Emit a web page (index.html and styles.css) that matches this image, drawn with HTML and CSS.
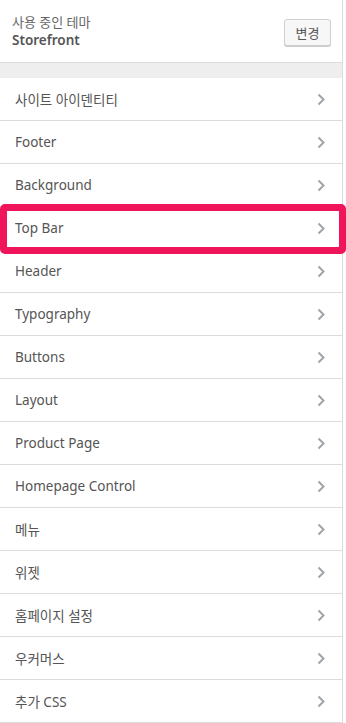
FILE: index.html
```html
<!DOCTYPE html>
<html lang="ko">
<head>
<meta charset="utf-8">
<link rel="stylesheet" href="styles.css">
</head>
<body>
<div class="panel">
  <div class="theme">
    <div class="theme-info">
      <div class="theme-label">사용 중인 테마</div>
      <div class="theme-name">Storefront</div>
    </div>
    <button class="change-btn">변경</button>
  </div>
  <div class="spacer"></div>
  <ul class="sections">
    <li class="section"><span>사이트 아이덴티티</span><svg class="chev" viewBox="0 0 9 13"><path d="M1.5 1.5 L6.5 6.5 L1.5 11.5"/></svg></li>
    <li class="section"><span>Footer</span><svg class="chev" viewBox="0 0 9 13"><path d="M1.5 1.5 L6.5 6.5 L1.5 11.5"/></svg></li>
    <li class="section"><span>Background</span><svg class="chev" viewBox="0 0 9 13"><path d="M1.5 1.5 L6.5 6.5 L1.5 11.5"/></svg></li>
    <li class="section"><span>Top Bar</span><svg class="chev" viewBox="0 0 9 13"><path d="M1.5 1.5 L6.5 6.5 L1.5 11.5"/></svg></li>
    <li class="section"><span>Header</span><svg class="chev" viewBox="0 0 9 13"><path d="M1.5 1.5 L6.5 6.5 L1.5 11.5"/></svg></li>
    <li class="section"><span>Typography</span><svg class="chev" viewBox="0 0 9 13"><path d="M1.5 1.5 L6.5 6.5 L1.5 11.5"/></svg></li>
    <li class="section"><span>Buttons</span><svg class="chev" viewBox="0 0 9 13"><path d="M1.5 1.5 L6.5 6.5 L1.5 11.5"/></svg></li>
    <li class="section"><span>Layout</span><svg class="chev" viewBox="0 0 9 13"><path d="M1.5 1.5 L6.5 6.5 L1.5 11.5"/></svg></li>
    <li class="section"><span>Product Page</span><svg class="chev" viewBox="0 0 9 13"><path d="M1.5 1.5 L6.5 6.5 L1.5 11.5"/></svg></li>
    <li class="section"><span>Homepage Control</span><svg class="chev" viewBox="0 0 9 13"><path d="M1.5 1.5 L6.5 6.5 L1.5 11.5"/></svg></li>
    <li class="section"><span>메뉴</span><svg class="chev" viewBox="0 0 9 13"><path d="M1.5 1.5 L6.5 6.5 L1.5 11.5"/></svg></li>
    <li class="section"><span>위젯</span><svg class="chev" viewBox="0 0 9 13"><path d="M1.5 1.5 L6.5 6.5 L1.5 11.5"/></svg></li>
    <li class="section"><span>홈페이지 설정</span><svg class="chev" viewBox="0 0 9 13"><path d="M1.5 1.5 L6.5 6.5 L1.5 11.5"/></svg></li>
    <li class="section"><span>우커머스</span><svg class="chev" viewBox="0 0 9 13"><path d="M1.5 1.5 L6.5 6.5 L1.5 11.5"/></svg></li>
    <li class="section"><span>추가 CSS</span><svg class="chev" viewBox="0 0 9 13"><path d="M1.5 1.5 L6.5 6.5 L1.5 11.5"/></svg></li>
  </ul>
  <div class="highlight"></div>
</div>
</body>
</html>
```

FILE: styles.css
```css
html, body {
  margin: 0;
  padding: 0;
  background: #fff;
}
body {
  font-family: "Noto Sans", "Noto Sans CJK KR", sans-serif;
  color: #555;
  width: 346px;
  height: 723px;
  overflow: hidden;
}
.panel {
  position: relative;
  width: 342px;
  border-right: 1px solid #dcdcdc;
  min-height: 723px;
  box-sizing: content-box;
}
.theme {
  height: 62px;
  border-bottom: 1px solid #dcdcdc;
  display: flex;
  align-items: center;
  justify-content: space-between;
  padding: 0 11px 0 12px;
  box-sizing: content-box;
}
.theme-info {
  display: flex;
  flex-direction: column;
  padding-top: 2px;
}
.theme-label {
  font-size: 13px;
  line-height: 17px;
  color: #666;
}
.theme-name {
  font-size: 13.5px;
  line-height: 19px;
  font-weight: 600;
  color: #555;
}
.change-btn {
  font-family: "Noto Sans CJK KR", "Noto Sans", sans-serif;
  font-size: 13px;
  color: #555;
  background: #f7f7f7;
  border: 1px solid #cfcfcf;
  border-radius: 3px;
  box-shadow: 0 1px 0 #ccc;
  width: 47px;
  height: 27px;
  padding: 0;
  margin-top: 2px;
}
.spacer {
  height: 15px;
  background: #eeeeee;
}
.sections {
  list-style: none;
  margin: 0;
  padding: 0;
}
.section {
  height: 42px;
  border-bottom: 1px solid #dcdcdc;
  display: flex;
  align-items: center;
  justify-content: space-between;
  padding: 0 16px 0 15px;
  font-size: 13.5px;
  color: #555;
}
.chev {
  width: 9px;
  height: 13px;
  fill: none;
  stroke: #a0a5aa;
  stroke-width: 2;
}
.highlight {
  position: absolute;
  left: 0;
  top: 204px;
  width: 346px;
  height: 50px;
  box-sizing: border-box;
  border: 7px solid #f0145a;
  border-radius: 5px;
  pointer-events: none;
}
```
